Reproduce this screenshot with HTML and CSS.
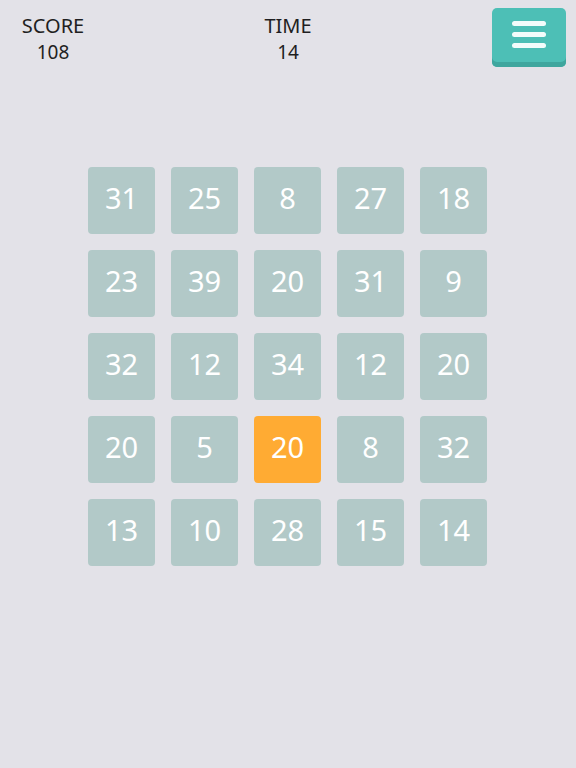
FILE: index.html
```html
<!DOCTYPE html>
<html>
<head>
<meta charset="utf-8">
<link rel="stylesheet" href="styles.css">
</head>
<body>
<div class="page">
  <header class="top">
    <div class="stat stat-score">
      <div class="label">SCORE</div>
      <div class="value">108</div>
    </div>
    <div class="stat stat-time">
      <div class="label">TIME</div>
      <div class="value">14</div>
    </div>
    <button class="menu" aria-label="Menu">
      <span class="bar"></span>
      <span class="bar"></span>
      <span class="bar"></span>
    </button>
  </header>
  <main class="board">
    <div class="tile">31</div><div class="tile">25</div><div class="tile">8</div><div class="tile">27</div><div class="tile">18</div>
    <div class="tile">23</div><div class="tile">39</div><div class="tile">20</div><div class="tile">31</div><div class="tile">9</div>
    <div class="tile">32</div><div class="tile">12</div><div class="tile">34</div><div class="tile">12</div><div class="tile">20</div>
    <div class="tile">20</div><div class="tile">5</div><div class="tile tile-active">20</div><div class="tile">8</div><div class="tile">32</div>
    <div class="tile">13</div><div class="tile">10</div><div class="tile">28</div><div class="tile">15</div><div class="tile">14</div>
  </main>
</div>
</body>
</html>
```

FILE: styles.css
```css
* { box-sizing: border-box; }
html, body {
  margin: 0;
  padding: 0;
  background: #e3e2e8;
}
body {
  width: 576px;
  height: 768px;
  overflow: hidden;
  font-family: "Noto Sans", "Open Sans", sans-serif;
  color: #1f1f22;
}
.page {
  width: 576px;
  height: 768px;
}
.top {
  display: flex;
  align-items: flex-start;
}
.stat {
  width: 106px;
  text-align: center;
  padding-top: 12px;
}
.stat-time {
  width: 100px;
  margin-left: 132px;
}
.label {
  font-size: 20px;
  line-height: 27px;
}
.value {
  font-size: 19px;
  line-height: 27px;
}
.menu {
  margin: 8px 0 0 154px;
  width: 74px;
  height: 59px;
  border: none;
  border-radius: 5px;
  background: #4dbfb6;
  box-shadow: inset 0 -5px 0 #3fa69e;
  display: flex;
  flex-direction: column;
  align-items: center;
  justify-content: flex-start;
  gap: 6px;
  padding: 13px 0 0 0;
}
.bar {
  display: block;
  width: 34px;
  height: 5px;
  border-radius: 3px;
  background: #f3fcfb;
}
.board {
  margin: 100px 0 0 88px;
  width: 399px;
  display: grid;
  grid-template-columns: repeat(5, 67px);
  grid-auto-rows: 67px;
  column-gap: 16px;
  row-gap: 16px;
}
.tile {
  background: #b2c9c8;
  border-radius: 4px;
  color: #ffffff;
  font-size: 29px;
  display: flex;
  align-items: center;
  justify-content: center;
  padding-bottom: 7px;
}
.tile-active {
  background: #ffab33;
}
```
